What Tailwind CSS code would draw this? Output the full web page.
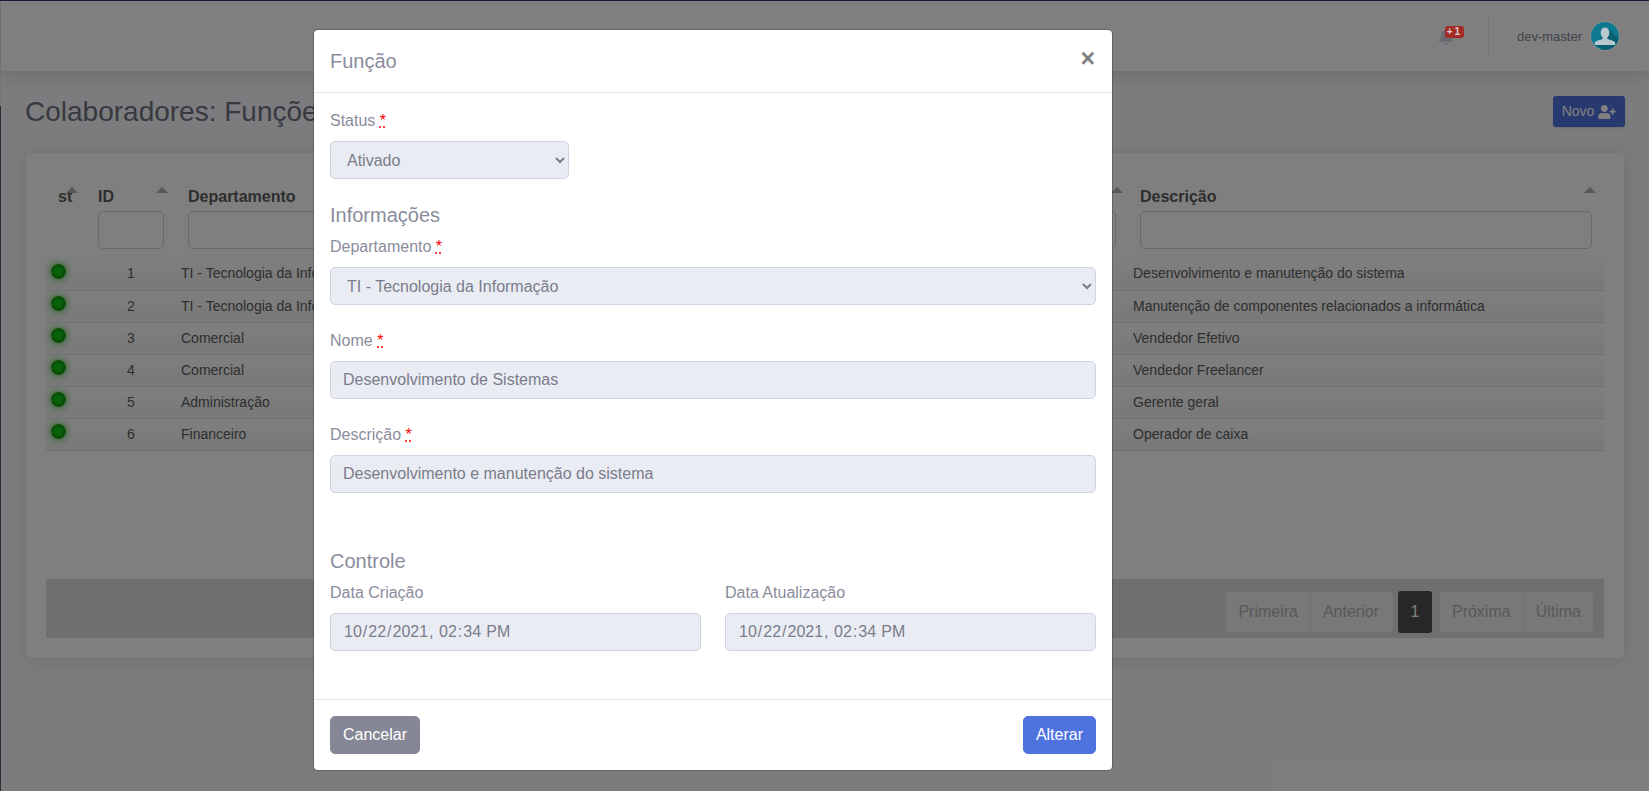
<!DOCTYPE html>
<html>
<head>
    <title>Colaboradores: Funções</title>
    <script src="https://cdn.jsdelivr.net/npm/@tailwindcss/browser@4"></script>
</head>
<body class="font-['Liberation_Sans',sans-serif] text-base text-[#858796] bg-[#f8f9fc] overflow-hidden">
<div class="relative flex w-[1649px] h-[791px] overflow-hidden border-t border-[#1a1a3c]">

    <!-- Sidebar edge -->
    <div class="w-px flex flex-col">
        <div class="h-[105px] bg-[#eeeeee]"></div>
        <div class="flex-1 bg-[#5a5c69]"></div>
    </div>

    <div class="flex-1 flex flex-col">
        <!-- Topbar -->
        <header class="h-[70px] bg-white shadow-[0_2px_20px_rgba(58,59,69,0.2)] flex items-center justify-end pr-[29px]">
            <div class="relative w-[14px] h-[16px] mr-[35px] mt-[1px]">
                <svg class="w-[14px] h-[16px] text-[#d1d3e2]" viewBox="0 0 448 512" fill="currentColor"><path d="M224 512c35.32 0 63.97-28.65 63.97-64H160.03c0 35.35 28.65 64 63.97 64zm215.39-149.71c-19.32-20.76-55.47-51.99-55.47-154.29 0-77.7-54.48-139.9-127.94-155.16V32c0-17.67-14.32-32-31.98-32s-31.98 14.33-31.98 32v20.84C118.56 68.1 64.08 130.3 64.08 208c0 102.3-36.15 133.53-55.47 154.29-6 6.45-8.66 14.16-8.61 21.71.11 16.4 12.98 32 32.1 32h383.8c19.12 0 32-15.6 32.1-32 .05-7.55-2.61-15.27-8.61-21.71z"/></svg>
                <span class="absolute z-20 left-[6px] -top-[3px] w-[19px] h-[12px] rounded-[3px] bg-[#a32c28] text-[#d8cccc] text-[10px] leading-[12px] font-bold text-center tracking-[2px]">+1</span>
            </div>
            <div class="w-px h-[38px] bg-[#e3e6f0] mr-[28px]"></div>
            <span class="text-[13px] mr-[8px] mt-[1px]">dev-master</span>
            <svg class="relative z-20 w-[30px] h-[30px]" viewBox="0 0 30 30">
                <circle cx="15" cy="15" r="15" fill="#8e8e8e"/>
                <circle cx="15" cy="15" r="14" fill="#0e7a90"/>
                <path d="M19 8L28.500 18A14 14 0 0 1 12 28.700L5 24z" fill="#0a5f73"/>
                <path d="M15 6.500c2.600 0 4.300 2 4.300 5 0 2.300-.9 4.200-2 5.300v1.300c2.800.9 6.700 1.700 7.700 3.400.3.600.3 1.500.2 2.500H4.800c-.1-1-.1-1.900.2-2.500 1-1.700 4.900-2.500 7.700-3.400v-1.300c-1.100-1.100-2-3-2-5.300 0-3 1.700-5 4.300-5z" fill="#b9c8cf"/>
            </svg>
        </header>

        <main class="flex-1 pl-[25px] pr-[24px]">
            <!-- Page heading -->
            <div class="flex justify-between items-start h-[82px] pt-[25px]">
                <h1 class="text-[28px] leading-[34px] text-[#707280] -ml-px -mt-px">Colaboradores: Funções</h1>
                <button class="h-[31px] w-[72px] rounded-[3px] bg-[#4e73df] text-white text-[14px] flex items-center justify-center gap-[4px] shadow-sm">
                    Novo
                    <svg class="w-[18px] h-[14px]" viewBox="0 0 640 512" fill="currentColor"><path d="M624 208h-64v-64c0-8.800-7.200-16-16-16h-32c-8.800 0-16 7.200-16 16v64h-64c-8.800 0-16 7.200-16 16v32c0 8.800 7.200 16 16 16h64v64c0 8.800 7.200 16 16 16h32c8.800 0 16-7.200 16-16v-64h64c8.800 0 16-7.200 16-16v-32c0-8.800-7.200-16-16-16zm-400 48c70.700 0 128-57.300 128-128S294.700 0 224 0 96 57.300 96 128s57.300 128 128 128zm89.600 32h-16.700c-22.200 10.200-46.900 16-72.900 16s-50.600-5.800-72.900-16h-16.700C60.200 288 0 348.200 0 422.400V464c0 26.500 21.500 48 48 48h352c26.500 0 48-21.500 48-48v-41.600c0-74.200-60.200-134.400-134.400-134.400z"/></svg>
                </button>
            </div>

            <!-- Card -->
            <section class="w-[1598px] bg-white rounded-[5px] shadow-[0_2px_20px_rgba(58,59,69,0.15)] px-[20px] pt-[20px] pb-[20px]">
                <table class="table-fixed border-collapse w-[1558px] text-[#5c5c5c]">
                    <colgroup>
                        <col class="w-[44px]">
                        <col class="w-[90px]">
                        <col class="w-[580px]">
                        <col class="w-[372px]">
                        <col class="w-[472px]">
                    </colgroup>
                    <thead>
                        <tr class="h-[85px] align-top text-left">
                            <th class="relative pt-[12px] pl-[12px] font-bold">st
                                <span class="absolute right-[12px] top-[14px] w-0 h-0 border-x-[6px] border-b-[6px] border-x-transparent border-b-[#b0b0b0]"></span>
                            </th>
                            <th class="relative pt-[12px] pl-[8px] pr-[16px] font-bold">ID
                                <span class="absolute right-[12px] top-[14px] w-0 h-0 border-x-[6px] border-b-[6px] border-x-transparent border-b-[#b0b0b0]"></span>
                                <input class="block w-full h-[38px] mt-[2px] bg-white border border-[#d1d3e2] rounded-[5px]">
                            </th>
                            <th class="relative pt-[12px] pl-[8px] pr-[16px] font-bold">Departamento
                                <input class="block w-full h-[38px] mt-[2px] bg-white border border-[#d1d3e2] rounded-[5px]">
                            </th>
                            <th class="relative pt-[12px] pl-[8px] pr-[16px] font-bold">Nome
                                <span class="absolute right-[9px] top-[14px] w-0 h-0 border-x-[6px] border-b-[6px] border-x-transparent border-b-[#b0b0b0]"></span>
                                <input class="block w-full h-[38px] mt-[2px] bg-white border border-[#d1d3e2] rounded-[5px]">
                            </th>
                            <th class="relative pt-[12px] pl-[8px] pr-[12px] font-bold">Descrição
                                <span class="absolute right-[8px] top-[14px] w-0 h-0 border-x-[6px] border-b-[6px] border-x-transparent border-b-[#b0b0b0]"></span>
                                <input class="block w-full h-[38px] mt-[2px] bg-white border border-[#d1d3e2] rounded-[5px]">
                            </th>
                        </tr>
                    </thead>
                    <tbody class="text-[14px]">
                        <tr class="h-[32px] border-b border-[#d8d8d8] bg-linear-to-b from-white to-[#f1f1f1]">
                            <td class="pl-[5px]"><div class="w-[15px] h-[15px] mb-[5px] rounded-full bg-radial from-[#18d818] to-[#0b7a0b] shadow-[0_0_8px_#1cb81c]"></div></td>
                            <td class="pr-[8px] text-center">1</td>
                            <td class="pl-px">TI - Tecnologia da Informação</td>
                            <td class="pl-[8px]">Desenvolvimento de Sistemas</td>
                            <td class="pl-px">Desenvolvimento e manutenção do sistema</td>
                        </tr>
                        <tr class="h-[32px] border-b border-[#d8d8d8] bg-linear-to-b from-white to-[#f1f1f1]">
                            <td class="pl-[5px]"><div class="w-[15px] h-[15px] mb-[5px] rounded-full bg-radial from-[#18d818] to-[#0b7a0b] shadow-[0_0_8px_#1cb81c]"></div></td>
                            <td class="pr-[8px] text-center">2</td>
                            <td class="pl-px">TI - Tecnologia da Informação</td>
                            <td class="pl-[8px]">Suporte Técnico</td>
                            <td class="pl-px">Manutenção de componentes relacionados a informática</td>
                        </tr>
                        <tr class="h-[32px] border-b border-[#d8d8d8] bg-linear-to-b from-white to-[#f1f1f1]">
                            <td class="pl-[5px]"><div class="w-[15px] h-[15px] mb-[5px] rounded-full bg-radial from-[#18d818] to-[#0b7a0b] shadow-[0_0_8px_#1cb81c]"></div></td>
                            <td class="pr-[8px] text-center">3</td>
                            <td class="pl-px">Comercial</td>
                            <td class="pl-[8px]">Vendedor</td>
                            <td class="pl-px">Vendedor Efetivo</td>
                        </tr>
                        <tr class="h-[32px] border-b border-[#d8d8d8] bg-linear-to-b from-white to-[#f1f1f1]">
                            <td class="pl-[5px]"><div class="w-[15px] h-[15px] mb-[5px] rounded-full bg-radial from-[#18d818] to-[#0b7a0b] shadow-[0_0_8px_#1cb81c]"></div></td>
                            <td class="pr-[8px] text-center">4</td>
                            <td class="pl-px">Comercial</td>
                            <td class="pl-[8px]">Vendedor</td>
                            <td class="pl-px">Vendedor Freelancer</td>
                        </tr>
                        <tr class="h-[32px] border-b border-[#d8d8d8] bg-linear-to-b from-white to-[#f1f1f1]">
                            <td class="pl-[5px]"><div class="w-[15px] h-[15px] mb-[5px] rounded-full bg-radial from-[#18d818] to-[#0b7a0b] shadow-[0_0_8px_#1cb81c]"></div></td>
                            <td class="pr-[8px] text-center">5</td>
                            <td class="pl-px">Administração</td>
                            <td class="pl-[8px]">Gerente</td>
                            <td class="pl-px">Gerente geral</td>
                        </tr>
                        <tr class="h-[32px] border-b border-[#d8d8d8] bg-linear-to-b from-white to-[#f1f1f1]">
                            <td class="pl-[5px]"><div class="w-[15px] h-[15px] mb-[5px] rounded-full bg-radial from-[#18d818] to-[#0b7a0b] shadow-[0_0_8px_#1cb81c]"></div></td>
                            <td class="pr-[8px] text-center">6</td>
                            <td class="pl-px">Financeiro</td>
                            <td class="pl-[8px]">Caixa</td>
                            <td class="pl-px">Operador de caixa</td>
                        </tr>
                    </tbody>
                </table>

                <!-- Pagination -->
                <div class="mt-[128px] h-[59px] pt-[7px] bg-[#dfdfdf] flex items-center justify-end pr-[11px] text-[#b0b0b0]">
                    <span class="h-[40px] px-[12px] flex items-center rounded-l-[3px] bg-[#f0f0f0] border-r border-[#e4e4e4]">Primeira</span>
                    <span class="h-[40px] pl-[12px] pr-[14px] flex items-center rounded-r-[3px] bg-[#f0f0f0]">Anterior</span>
                    <span class="h-[42px] w-[34px] ml-[5px] mr-[8px] flex items-center justify-center rounded-[3px] bg-[#505050] text-white">1</span>
                    <span class="h-[40px] px-[12px] flex items-center rounded-l-[3px] bg-[#f0f0f0] border-r border-[#e4e4e4]">Próxima</span>
                    <span class="h-[40px] px-[12px] flex items-center rounded-r-[3px] bg-[#f0f0f0]">Última</span>
                </div>
            </section>
        </main>
    </div>

    <!-- Modal backdrop -->
    <div class="absolute z-10 inset-0 bg-black/50"></div>

    <!-- Modal -->
    <div class="absolute z-30 left-[313px] top-[28px] w-[800px] bg-white bg-clip-padding rounded-[5px] border border-black/20 flex flex-col text-[#8a8c9c]">
        <div class="h-[63px] border-b border-[#e3e6f0] px-[16px] flex items-center justify-between">
            <h5 class="text-[20px] leading-[30px]">Função</h5>
            <button class="text-[25px] leading-none font-bold text-[#7f7f7f] -mt-[6px] mr-[1px]">×</button>
        </div>

        <div class="px-[16px] pt-[16px]">
            <label class="block leading-[24px] mb-[8px]">Status <abbr class="text-[#ff0000] underline decoration-dotted">*</abbr></label>
            <select disabled class="block w-[239px] h-[38px] px-[12px] bg-[#eaecf4] border border-[#d1d3e2] rounded-[5px] text-[#7a7c8a]">
                <option>Ativado</option>
            </select>

            <h5 class="text-[20px] leading-[24px] mt-[24px] mb-[8px]">Informações</h5>
            <label class="block leading-[24px] mb-[8px]">Departamento <abbr class="text-[#ff0000] underline decoration-dotted">*</abbr></label>
            <select disabled class="block w-full h-[38px] px-[12px] bg-[#eaecf4] border border-[#d1d3e2] rounded-[5px] text-[#7a7c8a]">
                <option>TI - Tecnologia da Informação</option>
            </select>

            <label class="block leading-[24px] mt-[24px] mb-[8px]">Nome <abbr class="text-[#ff0000] underline decoration-dotted">*</abbr></label>
            <input disabled value="Desenvolvimento de Sistemas" class="block w-full h-[38px] px-[12px] bg-[#eaecf4] border border-[#d1d3e2] rounded-[5px] text-[#7a7c8a]">

            <label class="block leading-[24px] mt-[24px] mb-[8px]">Descrição <abbr class="text-[#ff0000] underline decoration-dotted">*</abbr></label>
            <input disabled value="Desenvolvimento e manutenção do sistema" class="block w-full h-[38px] px-[12px] bg-[#eaecf4] border border-[#d1d3e2] rounded-[5px] text-[#7a7c8a]">

            <h5 class="text-[20px] leading-[24px] mt-[56px] mb-[8px]">Controle</h5>
            <div class="grid grid-cols-2 gap-x-[24px]">
                <div>
                    <label class="block leading-[24px] mb-[8px]">Data Criação</label>
                    <input disabled type="datetime-local" value="2021-10-22T14:34" class="block w-full h-[38px] px-[12px] bg-[#eaecf4] border border-[#d1d3e2] rounded-[5px] text-[#7a7c8a]">
                </div>
                <div>
                    <label class="block leading-[24px] mb-[8px]">Data Atualização</label>
                    <input disabled type="datetime-local" value="2021-10-22T14:34" class="block w-full h-[38px] px-[12px] bg-[#eaecf4] border border-[#d1d3e2] rounded-[5px] text-[#7a7c8a]">
                </div>
            </div>
        </div>

        <div class="mt-[48px] border-t border-[#e3e6f0] p-[16px] flex justify-between">
            <button class="h-[38px] px-[12px] rounded-[5px] bg-[#858796] border border-[#858796] text-white">Cancelar</button>
            <button class="h-[38px] px-[12px] rounded-[5px] bg-[#4e73df] border border-[#4e73df] text-white">Alterar</button>
        </div>
    </div>
</div>
</body>
</html>
